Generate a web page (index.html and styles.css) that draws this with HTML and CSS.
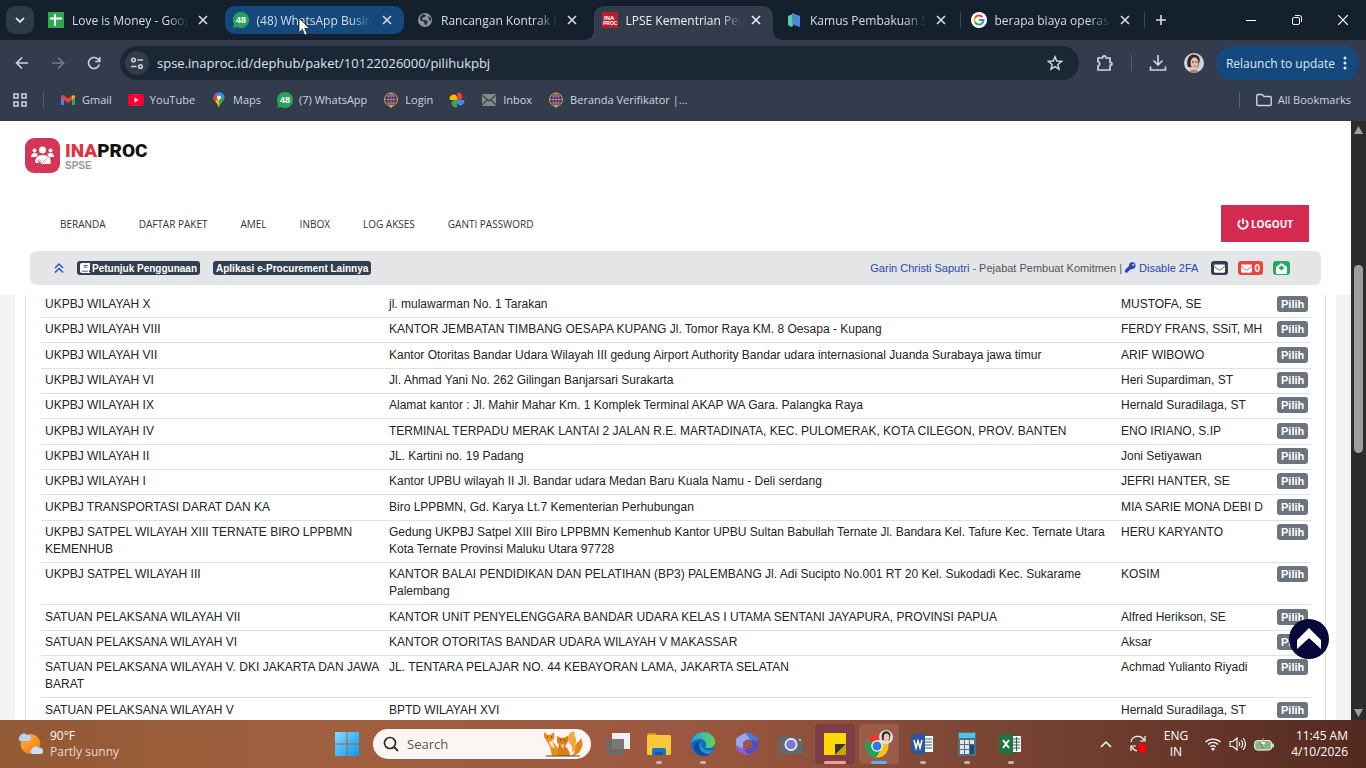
FILE: index.html
```html
<!DOCTYPE html>
<html lang="id">
<head>
    <meta charset="UTF-8">
    <meta name="viewport" content="width=device-width, initial-scale=1.0">
    <title>LPSE Kementrian Perhubungan</title>
    <link rel="stylesheet" href="styles.css">
</head>
<body>
    <!-- Icons used more than once -->
    <svg class="sprite" width="0" height="0">
        <symbol id="close" viewBox="0 0 10 10"><path d="M1 1l8 8M9 1l-8 8" stroke="currentColor" stroke-width="1.6" fill="none"/></symbol>
        <symbol id="envelope" viewBox="0 0 512 512"><path fill="currentColor" d="M48 64C21 64 0 85 0 112c0 15 7 29 19 38l218 163c11 9 27 9 38 0l218-163c12-9 19-23 19-38 0-27-21-48-48-48zM0 176v208c0 35 29 64 64 64h384c35 0 64-29 64-64V176L294 339c-23 17-53 17-76 0z"/></symbol>
        <symbol id="wa" viewBox="0 0 16 16"><path d="M8 0a8 8 0 1 1-4 14.900L0 16l1-4A8 8 0 0 1 8 0z" fill="#27a35b"/><text x="8" y="11" text-anchor="middle" font-family="Liberation Sans, sans-serif" font-weight="bold" font-size="9" fill="#fff">48</text></symbol>
        <symbol id="globe" viewBox="0 0 16 16"><path d="M8 16l-3-3h6z" fill="#d9b52a"/><circle cx="8" cy="7.500" r="6.500" fill="#3b2a68" stroke="#d9b52a"/><path d="M2 7.500h12M8 1v13M3.500 4h9M3.500 11h9M8 1C4 4 4 11 8 14M8 1c4 3 4 10 0 13" stroke="#c88f9c" stroke-width=".8" fill="none"/></symbol>
    </svg>

    <!-- Tab strip -->
    <header class="tabstrip">
        <button class="tab-search" aria-label="Search tabs"><svg width="10" height="10" viewBox="0 0 10 10"><path d="M1 3l4 4 4-4" stroke="currentColor" stroke-width="1.800" fill="none"/></svg></button>
        <div class="tabs">
            <div class="tab">
                <svg width="16" height="16" viewBox="0 0 16 16"><path fill="#2fa84f" d="M0 0h16v16H0z"/><path d="M2 6.500h12M7 2v12" stroke="#fff" stroke-width="2"/></svg>
                <span class="tab-title">Love is Money - Google Sheets</span>
                <button class="tab-close" aria-label="Close tab"><svg width="10" height="10"><use href="#close"/></svg></button>
            </div>
            <div class="tab hovered">
                <svg width="16" height="16"><use href="#wa"/></svg>
                <span class="tab-title">(48) WhatsApp Business</span>
                <button class="tab-close" aria-label="Close tab"><svg width="10" height="10"><use href="#close"/></svg></button>
            </div>
            <div class="tab">
                <svg width="16" height="16" viewBox="0 0 16 16"><circle cx="8" cy="8" r="7" fill="#8d949c"/><path d="M3 5l3-3 3 1-1 2-3 1 1 2h3l2 2-2 3H8l-1-3-4-2zM11 4l3 2v3l-2-1z" fill="#26303d"/></svg>
                <span class="tab-title">Rancangan Kontrak PPK</span>
                <button class="tab-close" aria-label="Close tab"><svg width="10" height="10"><use href="#close"/></svg></button>
            </div>
            <div class="tab active">
                <svg width="16" height="16" viewBox="0 0 16 16"><path fill="#b71f2d" d="M0 0h16v16H0z"/><text x="2" y="7.500" font-family="Liberation Sans, sans-serif" font-weight="bold" font-size="6" fill="#fff">INA</text><text x="1" y="13" font-family="Liberation Sans, sans-serif" font-weight="bold" font-size="5" fill="#fff">PROC</text></svg>
                <span class="tab-title">LPSE Kementrian Perhubungan</span>
                <button class="tab-close" aria-label="Close tab"><svg width="10" height="10"><use href="#close"/></svg></button>
            </div>
            <div class="tab divided">
                <svg width="16" height="16" viewBox="0 0 16 16"><path d="M2 4l5-2v12l-2 1-3-2z" fill="#4fd0a5"/><path d="M6 1l8 3v11l-6-2-2-2z" fill="#4b86e0"/></svg>
                <span class="tab-title">Kamus Pembakuan Statistik</span>
                <button class="tab-close" aria-label="Close tab"><svg width="10" height="10"><use href="#close"/></svg></button>
            </div>
            <div class="tab divided">
                <svg width="16" height="16" viewBox="0 0 16 16"><circle cx="8" cy="8" r="8" fill="#fff"/><g fill="none" stroke-width="2"><path d="M11.300 5A4.500 4.500 0 0 0 4 6" stroke="#ea4335"/><path d="M4 6a4.500 4.500 0 0 0 0 4" stroke="#fbbc05"/><path d="M4 10a4.500 4.500 0 0 0 7 1.500" stroke="#34a853"/><path d="M11 11.500A4.500 4.500 0 0 0 12.500 8H8" stroke="#4285f4"/></g></svg>
                <span class="tab-title">berapa biaya operasional</span>
                <button class="tab-close" aria-label="Close tab"><svg width="10" height="10"><use href="#close"/></svg></button>
            </div>
        </div>
        <button class="new-tab" aria-label="New tab"><svg width="12" height="12" viewBox="0 0 12 12"><path d="M6 1v10M1 6h10" stroke="currentColor" stroke-width="1.600"/></svg></button>
        <div class="window-buttons">
            <button aria-label="Minimize"><svg width="10" height="10" viewBox="0 0 10 10"><path d="M0 5.500h10" stroke="currentColor"/></svg></button>
            <button aria-label="Restore"><svg width="10" height="10" viewBox="0 0 10 10"><rect x=".5" y="2.500" width="7" height="7" rx="1.500" fill="none" stroke="currentColor"/><path d="M3 .5h4.500a2 2 0 0 1 2 2V7" fill="none" stroke="currentColor"/></svg></button>
            <button aria-label="Close"><svg width="10" height="10" viewBox="0 0 10 10"><path d="M0 0l10 10M10 0L0 10" stroke="currentColor" stroke-width="1.200"/></svg></button>
        </div>
        <svg class="cursor" width="13" height="19" viewBox="0 0 13 19"><path d="M1 1v14.500l3.300-3.200 2.500 5.700 2.400-1-2.500-5.500h4.800z" fill="#fff" stroke="#222" stroke-width=".8"/></svg>
    </header>

    <!-- Toolbar -->
    <div class="toolbar">
        <button class="tool" aria-label="Back"><svg width="14" height="14" viewBox="0 0 14 14"><path d="M13 7H2M7 1.500L1.500 7 7 12.500" stroke="currentColor" stroke-width="1.600" fill="none"/></svg></button>
        <button class="tool dim" aria-label="Forward"><svg width="14" height="14" viewBox="0 0 14 14"><path d="M1 7h11M7 1.500L12.500 7 7 12.500" stroke="currentColor" stroke-width="1.600" fill="none"/></svg></button>
        <button class="tool" aria-label="Reload"><svg width="14" height="14" viewBox="0 0 14 14"><path d="M12.300 8.500A5.500 5.500 0 1 1 11 3.200L12.500 5M12.700 1v4.500H8.200" stroke="currentColor" stroke-width="1.600" fill="none"/></svg></button>
        <div class="omnibox">
            <span class="site-info"><svg width="14" height="14" viewBox="0 0 14 14"><g fill="none" stroke="currentColor" stroke-width="1.500"><circle cx="3.500" cy="4" r="1.800"/><path d="M7.500 4H13M1 10.500h5.500"/><circle cx="10.500" cy="10.500" r="1.800"/></g></svg></span>
            <input class="url" type="text" aria-label="Address" value="spse.inaproc.id/dephub/paket/10122026000/pilihukpbj">
            <button class="star" aria-label="Bookmark"><svg width="16" height="16" viewBox="0 0 16 16"><path d="M8 1.800l1.800 4.300 4.700.4-3.600 3 1.100 4.600L8 11.700l-4 2.400 1.100-4.600-3.600-3 4.700-.4z" fill="none" stroke="currentColor" stroke-width="1.500"/></svg></button>
        </div>
        <button class="tool extensions" aria-label="Extensions"><svg width="18" height="18" viewBox="0 0 18 18"><path d="M2 4h4.500V3.500a1.700 1.700 0 0 1 3.400 0V4H14v4.300h.5a1.500 1.500 0 0 1 0 3H14V16H2v-4a2.200 2.200 0 0 0 0-4.300z" fill="none" stroke="currentColor" stroke-width="1.700"/></svg></button>
        <span class="rule"></span>
        <button class="tool" aria-label="Downloads"><svg width="18" height="18" viewBox="0 0 18 18"><path d="M9 1v10M4.500 6.500L9 11l4.500-4.500M1.500 12.500V16h15v-3.500" fill="none" stroke="currentColor" stroke-width="1.700"/></svg></button>
        <button class="tool" aria-label="Profile"><svg width="20" height="20" viewBox="0 0 20 20"><circle cx="10" cy="10" r="10" fill="#cfd3d6"/><path d="M4 14C2 9 4 2 9 1.500c6 0 8 4 6 9l-1 4z" fill="#332422"/><ellipse cx="10.500" cy="10" rx="4" ry="5.800" fill="#e6bea9"/><path d="M5 18.500q5-4 10 0a10 10 0 0 1-10 0z" fill="#a9836f"/><path d="M8 9h2M11.500 9h2" stroke="#322"/><path d="M9.500 13h2" stroke="#b33"/></svg></button>
        <button class="relaunch">Relaunch to update <svg width="4" height="14" viewBox="0 0 4 14"><circle cx="2" cy="2" r="1.500"/><circle cx="2" cy="7" r="1.500"/><circle cx="2" cy="12" r="1.500"/></svg></button>
    </div>

    <!-- Bookmarks -->
    <nav class="bookmarks">
        <button class="apps" aria-label="Apps"><svg width="14" height="14" viewBox="0 0 14 14"><g fill="none" stroke="currentColor" stroke-width="1.500"><path d="M1 1h4v4H1zM9 1h4v4H9zM1 9h4v4H1zM9 9h4v4H9z"/></g></svg></button>
        <span class="rule"></span>
        <a href="#"><svg width="16" height="16" viewBox="0 0 16 16"><path d="M1 4v9h3V7z" fill="#4285f4"/><path d="M15 4v9h-3V7z" fill="#34a853"/><path d="M12 4l1.500-1Q15 3 15 5l-3 3z" fill="#fbbc04"/><path d="M1 5q0-3 3-1.500l4 3 4-3V8l-4 3-4-3-3-2z" fill="#ea4335"/></svg>Gmail</a>
        <a href="#"><svg width="16" height="16" viewBox="0 0 16 16"><rect y="2" width="16" height="12" rx="3" fill="#f03"/><path d="M6.500 5.500v5l4-2.500z" fill="#fff"/></svg>YouTube</a>
        <a href="#"><svg width="16" height="16" viewBox="0 0 16 16"><path d="M8 0a5.500 5.500 0 0 1 5.500 5.500C13.500 9 9 11 8 16z" fill="#34a853"/><path d="M8 16C7 11 2.500 9 2.500 5.500L8 5.500z" fill="#fbbc04"/><path d="M2.500 6A5.500 5.500 0 0 1 5 1l3 4-4 5z" fill="#ea4335"/><path d="M4.500 1.500A5.500 5.500 0 0 1 13 3.500L8 8z" fill="#4285f4"/><circle cx="8" cy="5.500" r="2" fill="#fff"/></svg>Maps</a>
        <a href="#"><svg width="16" height="16"><use href="#wa"/></svg>(7) WhatsApp</a>
        <a href="#"><svg width="16" height="16"><use href="#globe"/></svg>Login</a>
        <a href="#" aria-label="Photos"><svg width="16" height="16" viewBox="0 0 16 16"><path d="M8 8V1a3.500 3.500 0 0 1 3 7z" fill="#ea4335"/><path d="M8 8h7a3.500 3.500 0 0 1-7 3z" fill="#4285f4"/><path d="M8 8v7a3.500 3.500 0 0 1-3-7z" fill="#34a853"/><path d="M8 8H1a3.500 3.500 0 0 1 7-3z" fill="#fbbc04"/></svg></a>
        <a href="#"><svg width="16" height="16" viewBox="0 0 16 16"><path d="M1 2h14v12H1z" fill="#85888b"/><path d="M1 3l7 6 7-6M1 13l5-5M15 13l-5-5" stroke="#3a414b" fill="none" stroke-width="1.200"/></svg>Inbox</a>
        <a href="#"><svg width="16" height="16"><use href="#globe"/></svg>Beranda Verifikator |...</a>
        <span class="rule last"></span>
        <a href="#"><svg width="16" height="16" viewBox="0 0 16 16"><path d="M.8 3.500q0-1 1-1H6l2 2h6.200q1 0 1 1v7q0 1-1 1H1.800q-1 0-1-1z" fill="none" stroke="currentColor" stroke-width="1.400"/></svg>All Bookmarks</a>
    </nav>

    <div class="viewport">
        <main class="page">
            <div class="site-header">
                <a class="logo" href="#">
                    <svg width="35" height="35" viewBox="0 0 35 35"><rect width="35" height="35" rx="9" fill="#d33656"/><g fill="#fff"><circle cx="17.500" cy="12" r="3.500"/><circle cx="9.500" cy="12.500" r="2"/><circle cx="25.500" cy="12.500" r="2"/><path d="M6 19q0-4 4-4l3 1-2 3zM29 19q0-4-4-4l-3 1 2 3zM10.500 25q-1-8 7-8 4 0 6 2l-6 5-3-2.500-2 1.500 2 2zM16 26l2 .2 7-6.500q1 2 .5 6.300z"/></g><path d="M14 22l3.500 3.500L25 19" stroke="#fff" stroke-width="1.500" fill="none"/></svg>
                    <span class="brand"><span class="brand-name"><span>INA</span>PROC</span><span class="brand-sub">SPSE</span></span>
                </a>
                <div class="menu-row">
                    <nav class="menu">
                        <a href="#">BERANDA</a>
                        <a href="#">DAFTAR PAKET</a>
                        <a href="#">AMEL</a>
                        <a href="#">INBOX</a>
                        <a href="#">LOG AKSES</a>
                        <a href="#">GANTI PASSWORD</a>
                    </nav>
                    <button class="logout"><svg width="12" height="12" viewBox="0 0 12 12"><path d="M6 .5v5.500M3.300 2.200a4.700 4.700 0 1 0 5.400 0" stroke="currentColor" stroke-width="1.800" fill="none"/></svg>LOGOUT</button>
                </div>
                <div class="userbar">
                    <a class="collapse" href="#" aria-label="Tutup"><svg width="10" height="10" viewBox="0 0 10 10"><path d="M1 5l4-4 4 4M1 9.500l4-4 4 4" stroke="currentColor" stroke-width="1.400" fill="none"/></svg></a>
                    <button class="badge dark"><svg width="10" height="10" viewBox="0 0 10 10"><path d="M2 0h8v7.500H9V9h1v1H2Q0 10 0 8V2q0-2 2-2z" fill="#fff"/><path d="M2 8.200h6M3.500 2.500h4M3.500 4.200h4" stroke="#323f50" stroke-width=".8"/></svg>Petunjuk Penggunaan</button>
                    <button class="badge dark">Aplikasi e-Procurement Lainnya</button>
                    <div class="user">
                        <a href="#">Garin Christi Saputri</a> - Pejabat Pembuat Komitmen |
                        <a href="#"><svg width="11" height="11" viewBox="0 0 11 11"><path d="M7.300 0a3.600 3.600 0 1 1-1.100 7.100L5.300 8H4.200v1.200H3v1.300H0V8.100l4-4A3.600 3.600 0 0 1 7.300 0z" fill="currentColor"/><circle cx="8.200" cy="2.800" r="1" fill="#e3e5e6"/></svg> Disable 2FA</a>
                    </div>
                    <div class="inbox-badges">
                        <button class="badge dark" aria-label="Pesan"><svg width="11" height="11"><use href="#envelope"/></svg></button>
                        <button class="badge red"><svg width="11" height="11"><use href="#envelope"/></svg>0</button>
                        <button class="badge green" aria-label="Pesan terbaca"><svg width="11" height="11" viewBox="0 0 11 11"><path d="M5.500 0L11 4v6q0 1-1 1H1q-1 0-1-1V4z" fill="#fff"/><path d="M5.500 2.300L8.500 5l-3 2.500-3-2.500z" fill="#20ad63"/></svg></button>
                    </div>
                </div>
            </div>

            <!-- Daftar UKPBJ -->
            <div class="content">
                <div class="card">
                    <table class="ukpbj">
                        <colgroup><col class="col-name"><col><col class="col-head"><col class="col-action"></colgroup>
                        <tbody>
                            <tr><td>UKPBJ WILAYAH X</td><td>jl. mulawarman No. 1 Tarakan</td><td>MUSTOFA, SE</td><td><button class="pilih">Pilih</button></td></tr>
                            <tr><td>UKPBJ WILAYAH VIII</td><td>KANTOR JEMBATAN TIMBANG OESAPA KUPANG Jl. Tomor Raya KM. 8 Oesapa - Kupang</td><td>FERDY FRANS, SSiT, MH</td><td><button class="pilih">Pilih</button></td></tr>
                            <tr><td>UKPBJ WILAYAH VII</td><td>Kantor Otoritas Bandar Udara Wilayah III gedung Airport Authority Bandar udara internasional Juanda Surabaya jawa timur</td><td>ARIF WIBOWO</td><td><button class="pilih">Pilih</button></td></tr>
                            <tr><td>UKPBJ WILAYAH VI</td><td>Jl. Ahmad Yani No. 262 Gilingan Banjarsari Surakarta</td><td>Heri Supardiman, ST</td><td><button class="pilih">Pilih</button></td></tr>
                            <tr><td>UKPBJ WILAYAH IX</td><td>Alamat kantor : Jl. Mahir Mahar Km. 1 Komplek Terminal AKAP WA Gara. Palangka Raya</td><td>Hernald Suradilaga, ST</td><td><button class="pilih">Pilih</button></td></tr>
                            <tr><td>UKPBJ WILAYAH IV</td><td>TERMINAL TERPADU MERAK LANTAI 2 JALAN R.E. MARTADINATA, KEC. PULOMERAK, KOTA CILEGON, PROV. BANTEN</td><td>ENO IRIANO, S.IP</td><td><button class="pilih">Pilih</button></td></tr>
                            <tr><td>UKPBJ WILAYAH II</td><td>JL. Kartini no. 19 Padang</td><td>Joni Setiyawan</td><td><button class="pilih">Pilih</button></td></tr>
                            <tr><td>UKPBJ WILAYAH I</td><td>Kantor UPBU wilayah II Jl. Bandar udara Medan Baru Kuala Namu - Deli serdang</td><td>JEFRI HANTER, SE</td><td><button class="pilih">Pilih</button></td></tr>
                            <tr><td>UKPBJ TRANSPORTASI DARAT DAN KA</td><td>Biro LPPBMN, Gd. Karya Lt.7 Kementerian Perhubungan</td><td>MIA SARIE MONA DEBI D</td><td><button class="pilih">Pilih</button></td></tr>
                            <tr><td>UKPBJ SATPEL WILAYAH XIII TERNATE BIRO LPPBMN KEMENHUB</td><td>Gedung UKPBJ Satpel XIII Biro LPPBMN Kemenhub Kantor UPBU Sultan Babullah Ternate Jl. Bandara Kel. Tafure Kec. Ternate Utara Kota Ternate Provinsi Maluku Utara 97728</td><td>HERU KARYANTO</td><td><button class="pilih">Pilih</button></td></tr>
                            <tr><td>UKPBJ SATPEL WILAYAH III</td><td>KANTOR BALAI PENDIDIKAN DAN PELATIHAN (BP3) PALEMBANG Jl. Adi Sucipto No.001 RT 20 Kel. Sukodadi Kec. Sukarame Palembang</td><td>KOSIM</td><td><button class="pilih">Pilih</button></td></tr>
                            <tr><td>SATUAN PELAKSANA WILAYAH VII</td><td>KANTOR UNIT PENYELENGGARA BANDAR UDARA KELAS I UTAMA SENTANI JAYAPURA, PROVINSI PAPUA</td><td>Alfred Herikson, SE</td><td><button class="pilih">Pilih</button></td></tr>
                            <tr><td>SATUAN PELAKSANA WILAYAH VI</td><td>KANTOR OTORITAS BANDAR UDARA WILAYAH V MAKASSAR</td><td>Aksar</td><td><button class="pilih">Pilih</button></td></tr>
                            <tr><td>SATUAN PELAKSANA WILAYAH V. DKI JAKARTA DAN JAWA BARAT</td><td>JL. TENTARA PELAJAR NO. 44 KEBAYORAN LAMA, JAKARTA SELATAN</td><td>Achmad Yulianto Riyadi</td><td><button class="pilih">Pilih</button></td></tr>
                            <tr><td>SATUAN PELAKSANA WILAYAH V</td><td>BPTD WILAYAH XVI</td><td>Hernald Suradilaga, ST</td><td><button class="pilih">Pilih</button></td></tr>
                        </tbody>
                    </table>
                </div>
            </div>
            <button class="to-top" aria-label="Ke atas"><svg width="26" height="24" viewBox="0 0 26 24"><path d="M13 1L1 13v9l12-11 12 11v-9z" fill="#fff"/></svg></button>
        </main>
        <div class="scrollbar">
            <svg width="9" height="8" viewBox="0 0 9 8"><path d="M4.500 0L9 8H0z" fill="#a0a0a0"/></svg>
            <div class="track"><div class="thumb"></div></div>
            <svg width="9" height="8" viewBox="0 0 9 8"><path d="M4.500 8L9 0H0z" fill="#a0a0a0"/></svg>
        </div>
    </div>

    <!-- Taskbar -->
    <footer class="taskbar">
        <div class="weather">
            <svg width="25" height="24" viewBox="0 0 25 24"><defs><linearGradient id="sun" y2="1"><stop stop-color="#fbb43a"/><stop offset="1" stop-color="#f2780c"/></linearGradient></defs><circle cx="12.500" cy="12" r="10" fill="url(#sun)"/><path d="M2 9a3 3 0 0 1 0-5 4 4 0 0 1 7-1 3 3 0 0 1 2 6z" fill="#b9d1f2"/><path d="M14 22a3 3 0 0 1 0-5 4 4 0 0 1 7-1 3 3 0 0 1 2 6z" fill="#c9dcf8"/></svg>
            <div>90°F<br><span>Partly sunny</span></div>
        </div>
        <div class="dock">
            <button class="app" aria-label="Start"><svg width="24" height="24" viewBox="0 0 24 24"><defs><linearGradient id="win" x2="1" y2="1"><stop stop-color="#7fdcff"/><stop offset="1" stop-color="#0f96f0"/></linearGradient></defs><path d="M0 0h11.500v11.500H0zM12.500 0H24v11.500H12.500zM0 12.500h11.500V24H0zM12.500 12.500H24V24H12.500z" fill="url(#win)"/></svg></button>
            <div class="search">
                <svg width="16" height="16" viewBox="0 0 16 16"><circle cx="7" cy="7" r="5.500" fill="none" stroke="#2a2a2a" stroke-width="1.700"/><path d="M11 11l4 4" stroke="#2a2a2a" stroke-width="1.800"/></svg>
                <input type="text" placeholder="Search" aria-label="Search">
                <svg width="40" height="26" viewBox="0 0 40 26"><path d="M25 24c3-1 5-4 4-8-1-3-5-5-4-10 1-4 4-6 7-5-2 3 1 5 1 8 0 4-1 6 1 9z" fill="#f0a93c"/><path d="M27 25c7-2 4-8 6-12 2-3 4-3 5-6 3 6 1 9 0 11-1 4-5 7-11 7z" fill="#e08a1e"/><path d="M1 1l4 3 3-.5L11 1l.5 6L9 10q6 5 8 15H9L7 16 3 9 1 6z" fill="#e58f23"/><path d="M14 5l4 2 4-.5 3-2v6l-3 5q5 3 5 9.500H15q-2-6 1-11l-2-3z" fill="#d97d16"/><path d="M5 9l2 2 2-1.500 3 8-4-2zM17 12l2 2 2-1-1 5z" fill="#fbe5bf"/><path d="M4 6h1M8 6h1M17 9h1M21 9h1" stroke="#3b2413"/><path d="M3 25h34" stroke="#5c421f"/></svg>
            </div>
            <button class="app narrow" aria-label="Task view"><svg width="24" height="22" viewBox="0 0 24 22"><path fill="#f1f1f1" d="M6 0h18v16H6z"/><path fill="#6b6c6c" fill-opacity=".9" d="M0 6h18v16H0z"/></svg></button>
            <button class="app running" aria-label="File Explorer"><svg width="24" height="22" viewBox="0 0 24 22"><path fill="#d99a14" d="M0 2q0-2 2-2h6l3 3H0z"/><rect y="2" width="24" height="20" rx="1.500" fill="#fbc83a"/><path fill="#1d75c8" d="M5 22v-5q0-2 2-2h10q2 0 2 2v5z"/><path fill="#10599c" d="M8 19h8v3H8z"/></svg></button>
            <button class="app running" aria-label="Edge"><svg width="24" height="24" viewBox="0 0 24 24"><defs><linearGradient id="edge" x2="1"><stop stop-color="#1f9ce4"/><stop offset="1" stop-color="#62d955"/></linearGradient></defs><circle cx="12" cy="12" r="12" fill="#126cc0"/><path d="M0 11C1 3 8 0 12 0c7 0 12 5 12 10 0 4-3 6-6 6-5 0-3-2-3-4 0-3-3-5-6-5-5 0-9 4-9 4z" fill="url(#edge)"/><path d="M9 10c-2 6 2 13 10 12-7 5-17 0-16-8 1-4 4-5 6-4z" fill="#0c4d98"/><path d="M10 10c-1 4 3 10 12 8l-3 4C9 22 6 14 10 10z" fill="#2290da"/></svg></button>
            <button class="app" aria-label="Microsoft 365"><svg width="24" height="24" viewBox="0 0 24 24"><path d="M10 1l4-.5 8 5q1 1 1 3v6l-6 3V9L8 5z" fill="#4d78d8"/><path d="M1 8q0-2 2-3l7-4 5 6-7 4v8l-6-2q-1-1-1-3z" fill="#9aa6f0"/><path d="M1 13l7 4 8-4 7-4v6q0 2-2 3l-7 5h-4l-7-4q-2-1-2-3z" fill="#8a5fd0"/><path d="M23 9v6q0 2-2 3l-7 5-5-5 8-5V8z" fill="#4c46b4" fill-opacity=".75"/><path d="M12 7.500l4.500 2.500v4.500L12 17l-4-2.500V10z" fill="#985741"/></svg></button>
            <button class="app" aria-label="Camera"><svg width="24" height="20" viewBox="0 0 24 20"><path d="M5 2h6l2 2h9q2 0 2 2v12q0 2-2 2H2q-2 0-2-2V4z" fill="#626870"/><circle cx="12" cy="10.500" r="6.500" fill="#f2f4f8"/><circle cx="12" cy="10.500" r="4.800" fill="#7c78d8"/><circle cx="21" cy="6" r="1" fill="#ddd"/></svg></button>
            <button class="app attention" aria-label="Sticky Notes"><svg width="22" height="22" viewBox="0 0 22 22"><path fill="#fcd808" d="M0 0h22v22H0z"/><path fill="#343431" d="M11 11h11L11 22z"/><path fill="#c8a604" d="M22 11v11H11z"/></svg></button>
            <button class="app focused" aria-label="Chrome"><svg width="28" height="30" viewBox="0 0 28 30"><circle cx="12" cy="17" r="11.500" fill="#fbc116"/><path d="M2 11a11.500 11.500 0 0 1 20 0H12L7 20z" fill="#e33b2e"/><path d="M2 11a11.500 11.500 0 0 0 9 17.500L17 19l-5-2z" fill="#21a153"/><circle cx="12" cy="17" r="5.800" fill="#fff"/><circle cx="12" cy="17" r="4.500" fill="#2d79ea"/><circle cx="21" cy="8" r="7" fill="#e4e1df"/><path d="M17 11q-2-8 4-9 6 1 4 7l-1 3z" fill="#382a28"/><ellipse cx="21.500" cy="8.500" rx="2.800" ry="4" fill="#e8c3b0"/></svg></button>
            <button class="app running" aria-label="Word"><svg width="24" height="22" viewBox="0 0 24 22"><path fill="#fff" d="M12 3h10v16H12z"/><path d="M13 6h8M13 9h8M13 12h8M13 15h8" stroke="#2b579a" stroke-width="1.200"/><path fill="#2b579a" d="M0 2l14-2v22L0 20z"/><path d="M3 7l2 8 2-7 2 7 2-8" stroke="#fff" stroke-width="1.500" fill="none"/></svg></button>
            <button class="app running" aria-label="Calculator"><svg width="18" height="24" viewBox="0 0 18 24"><path fill="#53707f" d="M0 0h18v24H0z"/><path fill="#50c3ee" d="M1 1h16v5H1z"/><path fill="#dce7ed" d="M2 8h4v4H2zM7 8h4v4H7zM12 8h4v4h-4zM2 13h4v4H2zM7 13h4v4H7zM2 18h4v4H2zM7 18h4v4H7z"/><path fill="#174b80" d="M12 13h4v9h-4z"/></svg></button>
            <button class="app running" aria-label="Excel"><svg width="24" height="22" viewBox="0 0 24 22"><path fill="#fff" d="M12 3h10v16H12z"/><path d="M13 6h8M13 9h8M13 12h8M13 15h8M17.500 4v14" stroke="#217346" stroke-width="1.200"/><path fill="#217346" d="M0 2l14-2v22L0 20z"/><path d="M4 7l6 8M10 7l-6 8" stroke="#fff" stroke-width="1.900"/></svg></button>
        </div>
        <div class="tray">
            <svg width="12" height="8" viewBox="0 0 12 8"><path d="M1 7l5-5 5 5" stroke="#fff" stroke-width="1.500" fill="none"/></svg>
            <svg width="18" height="18" viewBox="0 0 18 18"><path d="M2 7a7 7 0 0 1 13-2M16 1v5h-5M2 16v-5h5M3 12a7 7 0 0 0 5 4" stroke="#fff" stroke-width="1.200" fill="none"/><circle cx="13" cy="13" r="4.500" fill="#f00"/></svg>
            <div class="lang">ENG<br>IN</div>
            <div class="status">
                <svg width="16" height="14" viewBox="0 0 16 14"><g fill="none" stroke="#fff" stroke-width="1.300"><path d="M.5 5a11 11 0 0 1 15 0M3 7.500a7 7 0 0 1 10 0M5.300 9.800a4 4 0 0 1 5.400 0"/></g><circle cx="8" cy="12" r="1.500" fill="#fff"/></svg>
                <svg width="17" height="14" viewBox="0 0 17 14"><g fill="none" stroke="#fff" stroke-width="1.100"><path d="M1 4.500h3L8 1v12L4 9.500H1zM10 5q1.500 2 0 4M12 3q3.500 4 0 8M14 1q5 6 0 12"/></g></svg>
                <svg width="20" height="14" viewBox="0 0 20 14"><rect x=".6" y="3.600" width="17" height="9.500" rx="3" fill="#82bd78" stroke="#fff"/><path d="M19 6.500v4" stroke="#fff" stroke-width="1.500"/><path d="M10 0L6 7h3l-1 4 5-6H9.500z" fill="#fff" stroke="#6a3a2c" stroke-width=".5"/></svg>
            </div>
            <div class="clock">11:45 AM<br>4/10/2026</div>
        </div>
    </footer>
</body>
</html>
```

FILE: styles.css
```css
* {
    margin: 0;
    padding: 0;
    box-sizing: border-box;
}

body {
    display: flex;
    flex-direction: column;
    height: 100vh;
    overflow: hidden;
    font-family: "Open Sans", "Noto Sans", sans-serif;
    font-size: 12px;
    background: #323c4c;
}

button {
    display: flex;
    align-items: center;
    justify-content: center;
    border: none;
    background: none;
    color: inherit;
    font: inherit;
    cursor: pointer;
}

input {
    border: none;
    outline: none;
    background: none;
    font: inherit;
}

a {
    color: inherit;
    text-decoration: none;
}

svg {
    flex: none;
}

.sprite {
    position: absolute;
}

/* Tab strip */
.tabstrip {
    position: relative;
    display: flex;
    align-items: center;
    height: 40px;
    flex: none;
    background: #15202d;
    color: #d5dde6;
}

.tab-search {
    width: 28px;
    height: 28px;
    margin: 0 6px;
    border-radius: 9px;
    background: #2f3a49;
}

.tabs {
    display: flex;
    flex: 1;
    max-width: 1107px;
}

.tab {
    position: relative;
    display: flex;
    align-items: center;
    flex: 1;
    min-width: 0;
    height: 28px;
    margin-right: 5px;
    padding: 0 12px 0 8px;
    border-radius: 10px;
}

.tab-title {
    flex: 1;
    margin: 0 10px 0 8px;
    overflow: hidden;
    white-space: nowrap;
    mask-image: linear-gradient(to right, #000 82%, transparent);
}

.hovered {
    background: #15487c;
}

.active {
    height: 34px;
    margin-bottom: -6px;
    padding-bottom: 6px;
    border-radius: 10px 10px 0 0;
    background: #323c4c;
    color: #eef2f6;
}

/* Flared feet of the active tab */
.active::before,
.active::after {
    content: "";
    position: absolute;
    bottom: 0;
    width: 10px;
    height: 10px;
}

.active::before {
    right: 100%;
    background: radial-gradient(circle at 0 0, transparent 10px, #323c4c 10px);
}

.active::after {
    left: 100%;
    background: radial-gradient(circle at 100% 0, transparent 10px, #323c4c 10px);
}

.divided::after {
    content: "";
    position: absolute;
    right: -3px;
    width: 1px;
    height: 16px;
    background: #3b4757;
}

.new-tab {
    width: 28px;
    height: 28px;
}

.window-buttons {
    display: flex;
    margin-left: auto;
    color: #fff;
}

.window-buttons button {
    width: 46px;
    height: 40px;
}

.cursor {
    position: absolute;
    left: 298px;
    top: 17px;
}

/* Toolbar */
.toolbar {
    display: flex;
    align-items: center;
    height: 46px;
    flex: none;
    padding: 0 7px 0 4px;
    color: #ccd5df;
}

.tool {
    width: 36px;
    height: 34px;
}

.dim {
    color: #727d8b;
}

.omnibox {
    display: flex;
    align-items: center;
    flex: 1;
    height: 34px;
    margin: 0 8px;
    padding: 0 16px 0 5px;
    border-radius: 17px;
    background: #1c2736;
}

.site-info {
    display: flex;
    align-items: center;
    justify-content: center;
    width: 24px;
    height: 24px;
    border-radius: 12px;
    background: #323c4c;
}

.url {
    flex: 1;
    margin-left: 8px;
    color: #dde3ea;
    font-size: 13px;
}

.rule {
    width: 1px;
    height: 16px;
    margin: 0 8px;
    background: #536071;
}

.relaunch {
    gap: 8px;
    height: 34px;
    margin-left: 4px;
    padding: 0 12px 0 10px;
    border-radius: 17px;
    background: #15487c;
    color: #dcebfa;
    fill: #dcebfa;
    white-space: nowrap;
}

/* Bookmarks bar */
.bookmarks {
    display: flex;
    align-items: center;
    gap: 16px;
    height: 35px;
    flex: none;
    padding: 0 15px 8px 13px;
    color: #ccd5df;
    font-size: 11px;
}

.bookmarks a {
    display: flex;
    align-items: center;
    gap: 6px;
    white-space: nowrap;
}

.bookmarks .rule {
    margin: 0;
}

.bookmarks .last {
    margin-left: auto;
}

/* Web page */
.viewport {
    display: flex;
    flex: 1;
    min-height: 0;
}

.page {
    position: relative;
    display: flex;
    flex-direction: column;
    flex: 1;
    min-width: 0;
    background: #f3f3f3;
    color: #212529;
    font-family: "Liberation Sans", Arial, sans-serif;
}

.site-header {
    padding: 17px 30px 10px;
    background: #fff;
}

.logo {
    display: flex;
    align-items: center;
    gap: 5px;
    margin-left: -5px;
}

.brand {
    display: flex;
    flex-direction: column;
}

.brand-name {
    color: #111;
    font: 900 19px/20px Roboto, "Liberation Sans", sans-serif;
}

.brand-name span {
    color: #dc3545;
}

.brand-sub {
    color: #999;
    font-size: 10px;
    font-weight: bold;
    line-height: 10px;
}

.menu-row {
    display: flex;
    align-items: center;
    justify-content: space-between;
    margin: 32px 12px 9px 30px;
}

.menu {
    display: flex;
    gap: 33px;
    color: #333;
    font-family: "Open Sans", "Noto Sans", sans-serif;
    font-size: 10px;
}

.logout {
    gap: 2px;
    width: 88px;
    height: 37px;
    background: #d42a50;
    color: #fff;
    font-family: "Open Sans", "Noto Sans", sans-serif;
    font-size: 10px;
    font-weight: bold;
}

.userbar {
    display: flex;
    align-items: center;
    gap: 13px;
    height: 34px;
    padding: 0 31px 0 24px;
    border-radius: 6px;
    background: #e3e5e6;
    color: #555;
    font-size: 11px;
}

.userbar a {
    color: #2748b8;
}

.collapse {
    display: flex;
}

.user {
    margin-left: auto;
}

.user svg {
    vertical-align: -1px;
}

.inbox-badges {
    display: flex;
    gap: 10px;
}

.badge {
    gap: 2px;
    height: 14px;
    padding: 0 3px;
    border-radius: 3px;
    color: #fff;
    font-size: 10px;
    font-weight: bold;
    white-space: nowrap;
}

.dark {
    background: #323f50;
}

.red {
    background: #e8453c;
}

.green {
    background: #20ad63;
}

.content {
    flex: 1;
    min-height: 0;
    margin: 0 15px;
    padding: 0 10px;
    overflow: hidden;
    background: #fff;
}

.card {
    padding: 0 14px 0 15px;
    border: 1px solid #dcdfe2;
    border-width: 0 1px;
}

/* Table is scrolled a little under the header */
.ukpbj {
    width: 100%;
    margin-top: -2px;
    border-collapse: collapse;
    table-layout: fixed;
    font-size: 12px;
    line-height: 17px;
}

.col-name {
    width: 344px;
}

.col-head {
    width: 156px;
}

.col-action {
    width: 38px;
}

.ukpbj td {
    padding: 3px 4px 4px;
    border-bottom: 1px solid #dee2e6;
    vertical-align: top;
}

.ukpbj tr:nth-child(3n) td {
    padding-top: 4px;
}

.pilih {
    height: 16px;
    padding: 0 4px;
    border-radius: 3px;
    background: #6c757d;
    color: #fff;
    font-size: 11px;
    font-weight: bold;
}

.to-top {
    position: absolute;
    right: 22px;
    bottom: 61px;
    width: 40px;
    height: 40px;
    border-radius: 50%;
    background: #070738;
}

.scrollbar {
    display: flex;
    flex-direction: column;
    align-items: center;
    gap: 6px;
    width: 15px;
    padding: 5px 0 3px;
    background: #2c2c2c;
}

.track {
    flex: 1;
    width: 9px;
    padding: 125px 0 0;
}

.thumb {
    height: 43%;
    border-radius: 5px;
    background: #9e9e9e;
}

/* Taskbar */
.taskbar {
    display: grid;
    grid-template-columns: 1fr auto 1fr;
    align-items: center;
    height: 48px;
    flex: none;
    background: linear-gradient(to right, #925a35, #a0603f 25%, #9c5840 50%, #7e4735 70%, #542a20);
    color: #fff;
    line-height: 16px;
}

.weather {
    display: flex;
    align-items: center;
    gap: 7px;
    padding-left: 18px;
}

.weather span {
    color: #ecd9cc;
}

.dock {
    display: flex;
    align-items: center;
    padding-right: 8px;
}

.app {
    position: relative;
    width: 44px;
    height: 40px;
}

.narrow {
    width: 38px;
}

.search {
    display: flex;
    align-items: center;
    gap: 8px;
    width: 218px;
    height: 30px;
    margin: 0 8px 0 4px;
    padding: 0 8px 0 10px;
    border-radius: 15px;
    background: #fbf6f4;
}

.search input {
    flex: 1;
    min-width: 0;
    font-size: 13px;
}

.search input::placeholder {
    color: #555;
}

/* Running indicator under the app icons */
.running::after,
.attention::after,
.focused::after {
    content: "";
    position: absolute;
    bottom: 0;
    width: 6px;
    height: 3px;
    border-radius: 2px;
    background: #c9b4ab;
}

.attention,
.focused {
    width: 40px;
    margin: 0 2px;
    border-radius: 4px;
    background: #7d3d45;
}

.focused {
    background: #985c48;
}

.attention::after {
    width: 22px;
    background: #ff9a9a;
}

.focused::after {
    width: 16px;
    background: #5ab6e8;
}

.tray {
    display: flex;
    align-items: center;
    justify-content: flex-end;
    gap: 17px;
    padding-right: 18px;
}

.lang {
    text-align: center;
}

.status {
    display: flex;
    gap: 8px;
}

.clock {
    text-align: right;
    white-space: nowrap;
}
```
